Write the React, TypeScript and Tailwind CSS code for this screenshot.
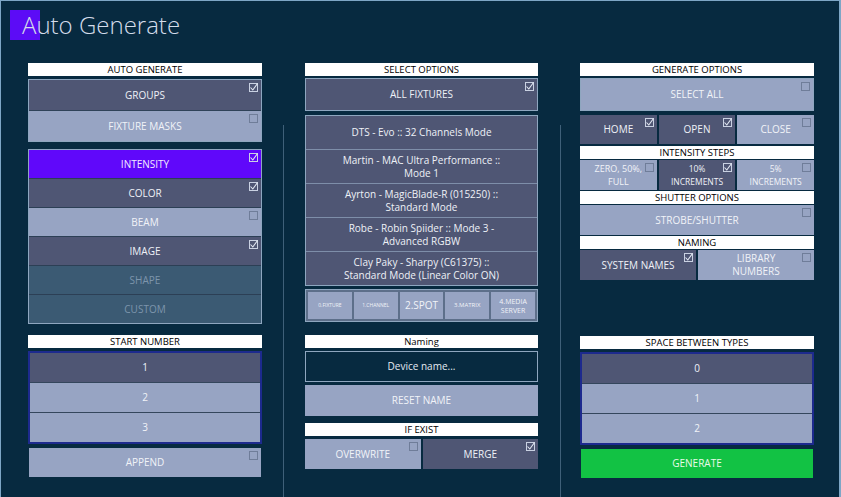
import React from "react";

type Tone = "dark" | "light" | "purple" | "dim" | "green";
type Mark = "on" | "off" | "none";

const toneClass: Record<Tone, string> = {
  dark: "bg-[#4f5674] text-[#eef1f7]",
  light: "bg-[#97a4c3] text-[#f1f3f8]",
  purple: "bg-[#6008fa] text-[#f3eaff]",
  dim: "bg-[#3b5a73] text-[#7d95ac]",
  green: "bg-[#12c244] text-[#eafbe9]",
};

const CheckMark = ({ mark }: { mark: Mark }) => {
  if (mark === "none") return null;
  return (
    <svg
      width="9"
      height="9"
      viewBox="0 0 9 9"
      className="absolute top-[3px] right-[3px]"
    >
      <rect
        x="0.5"
        y="0.5"
        width="8"
        height="8"
        fill="none"
        stroke={mark === "on" ? "#c9d1e2" : "#6f7d99"}
        strokeWidth="1"
      />
      {mark === "on" && (
        <path d="M1.5 4.5 L3.8 7 L8.5 0.5" fill="none" stroke="#e4e9f3" strokeWidth="1.1" />
      )}
    </svg>
  );
};

const Btn = ({
  label,
  tone = "dark",
  mark = "none",
  h,
  className = "",
  text = "text-[10px]",
}: {
  label: React.ReactNode;
  tone?: Tone;
  mark?: Mark;
  h: string;
  className?: string;
  text?: string;
}) => (
  <div
    className={`relative flex items-center justify-center text-center leading-[13px] ${toneClass[tone]} ${h} ${text} ${className}`}
  >
    {label}
    <CheckMark mark={mark} />
  </div>
);

const Header = ({ label, className = "" }: { label: string; className?: string }) => (
  <div
    className={`h-[13px] bg-white text-black text-[9.5px] leading-[13px] text-center font-medium ${className}`}
  >
    {label}
  </div>
);

const fixtures = [
  ["DTS - Evo :: 32 Channels Mode"],
  ["Martin - MAC Ultra Performance ::", "Mode 1"],
  ["Ayrton - MagicBlade-R (015250) ::", "Standard Mode"],
  ["Robe - Robin Spiider :: Mode 3 -", "Advanced RGBW"],
  ["Clay Paky - Sharpy (C61375) ::", "Standard Mode (Linear Color ON)"],
];

const Separator = () => <div className="w-px self-stretch mt-[62px] bg-[#3f6079]" />;

export default function App() {
  return (
    <div
      className="w-[841px] h-[497px] overflow-hidden bg-[#072a40] border-t border-l border-r-2 border-[#7ea6c6] flex flex-col"
      style={{ fontFamily: '"Open Sans", "Noto Sans", sans-serif' }}
    >
      {/* title */}
      <div className="h-[62px] shrink-0 pt-[9px] pl-[9px] flex items-start">
        <div className="w-[30px] h-[30px] bg-[#5c0cf6]" />
        <div className="ml-[-18px] mt-[-1px] text-[24px] font-light text-[#d4dcea] leading-[32px]">
          Auto Generate
        </div>
      </div>

      <div className="flex flex-1 pl-[27px]">
        {/* left column */}
        <div className="w-[234px] flex flex-col">
          <Header label="AUTO GENERATE" />
          <div className="mt-[3px] border border-[#8ea6bf] flex flex-col gap-px bg-[#2f4258]">
            <Btn label="GROUPS" tone="dark" mark="on" h="h-[30px]" />
            <Btn label="FIXTURE MASKS" tone="light" mark="off" h="h-[30px]" />
          </div>
          <div className="mt-[7px] border border-[#8ea6bf] flex flex-col gap-px bg-[#2c3f55]">
            <Btn label="INTENSITY" tone="purple" mark="on" h="h-[28px]" />
            <Btn label="COLOR" tone="dark" mark="on" h="h-[28px]" />
            <Btn label="BEAM" tone="light" mark="off" h="h-[28px]" />
            <Btn label="IMAGE" tone="dark" mark="on" h="h-[28px]" />
            <Btn label="SHAPE" tone="dim" h="h-[28px]" />
            <Btn label="CUSTOM" tone="dim" h="h-[28px]" />
          </div>
          <Header label="START NUMBER" className="mt-[11px]" />
          <div className="mt-[3px] border-2 border-[#1d2a8e] flex flex-col gap-px bg-[#34465c]">
            <Btn label="1" tone="dark" h="h-[29px]" />
            <Btn label="2" tone="light" h="h-[29px]" />
            <Btn label="3" tone="light" h="h-[29px]" />
          </div>
          <Btn label="APPEND" tone="light" mark="off" h="h-[29px]" className="mt-[4px] mx-[1px]" />
        </div>

        <div className="ml-[21px] mr-[21px] flex">
          <Separator />
        </div>

        {/* middle column */}
        <div className="w-[233px] flex flex-col">
          <Header label="SELECT OPTIONS" />
          <Btn
            label="ALL FIXTURES"
            tone="dark"
            mark="on"
            h="h-[33px]"
            className="mt-[2px] border border-[#8ea6bf]"
          />
          <div className="mt-[4px] border border-[#8ea6bf] flex flex-col gap-px bg-[#7e8ea9]">
            {fixtures.map((f, i) => (
              <div
                key={i}
                className="h-[33px] bg-[#4f5674] text-[#eef1f7] text-[10px] leading-[13px] flex items-center justify-center text-center"
              >
                <span>
                  {f[0]}
                  {f[1] && (
                    <>
                      <br />
                      {f[1]}
                    </>
                  )}
                </span>
              </div>
            ))}
          </div>
          <div className="mt-[3px] border border-[#8ea6bf] bg-[#5d6f8a] p-[2px] flex gap-[2px] h-[33px]">
            <Btn label="0.FIXTURE" tone="light" h="h-full" className="flex-1" text="text-[5px]" />
            <Btn label="1.CHANNEL" tone="light" h="h-full" className="flex-1" text="text-[5px]" />
            <Btn label="2.SPOT" tone="light" h="h-full" className="flex-1" text="text-[10px]" />
            <Btn label="3.MATRIX" tone="light" h="h-full" className="flex-1" text="text-[6px]" />
            <Btn
              label={
                <span className="leading-[9px]">
                  4.MEDIA
                  <br />
                  SERVER
                </span>
              }
              tone="light"
              h="h-full"
              className="flex-1"
              text="text-[7px]"
            />
          </div>
          <Header label="Naming" className="mt-[13px]" />
          <div className="mt-[3px] h-[31px] border border-[#8ea6bf] bg-[#072a40] text-[#e6ebf3] text-[10px] flex items-center justify-center">
            Device name...
          </div>
          <Btn label="RESET NAME" tone="light" h="h-[31px]" className="mt-[3px]" />
          <Header label="IF EXIST" className="mt-[7px]" />
          <div className="mt-[3px] flex gap-[2px]">
            <Btn label="OVERWRITE" tone="light" mark="off" h="h-[30px]" className="flex-1" />
            <Btn label="MERGE" tone="dark" mark="on" h="h-[30px]" className="flex-1" />
          </div>
        </div>

        <div className="ml-[22px] mr-[19px] flex">
          <Separator />
        </div>

        {/* right column */}
        <div className="w-[234px] flex flex-col">
          <Header label="GENERATE OPTIONS" />
          <Btn
            label="SELECT ALL"
            tone="light"
            mark="off"
            h="h-[33px]"
            className="mt-[2px] border border-[#8ea6bf]"
          />
          <div className="mt-[4px] flex gap-[2px]">
            <Btn label="HOME" tone="dark" mark="on" h="h-[29px]" className="flex-1" />
            <Btn label="OPEN" tone="dark" mark="on" h="h-[29px]" className="flex-1" />
            <Btn label="CLOSE" tone="light" mark="off" h="h-[29px]" className="flex-1" />
          </div>
          <Header label="INTENSITY STEPS" className="mt-[2px]" />
          <div className="mt-[1px] flex gap-[2px]">
            <Btn
              label={
                <span>
                  ZERO, 50%,
                  <br />
                  FULL
                </span>
              }
              tone="light"
              mark="off"
              h="h-[30px]"
              className="flex-1"
              text="text-[9px]"
            />
            <Btn
              label={
                <span>
                  10%
                  <br />
                  INCREMENTS
                </span>
              }
              tone="dark"
              mark="on"
              h="h-[30px]"
              className="flex-1"
              text="text-[8.5px]"
            />
            <Btn
              label={
                <span>
                  5%
                  <br />
                  INCREMENTS
                </span>
              }
              tone="light"
              mark="off"
              h="h-[30px]"
              className="flex-1"
              text="text-[8.5px]"
            />
          </div>
          <Header label="SHUTTER OPTIONS" className="mt-[1px]" />
          <Btn label="STROBE/SHUTTER" tone="light" mark="off" h="h-[30px]" className="mt-[1px]" />
          <Header label="NAMING" className="mt-[1px]" />
          <div className="mt-[1px] flex gap-[2px]">
            <Btn label="SYSTEM NAMES" tone="dark" mark="on" h="h-[30px]" className="flex-1" />
            <Btn
              label={
                <span>
                  LIBRARY
                  <br />
                  NUMBERS
                </span>
              }
              tone="light"
              mark="off"
              h="h-[30px]"
              className="flex-1"
            />
          </div>
          <Header label="SPACE BETWEEN TYPES" className="mt-[56px]" />
          <div className="mt-[3px] border-2 border-[#1d2a8e] flex flex-col gap-px bg-[#34465c]">
            <Btn label="0" tone="dark" h="h-[29px]" />
            <Btn label="1" tone="light" h="h-[29px]" />
            <Btn label="2" tone="light" h="h-[29px]" />
          </div>
          <Btn label="GENERATE" tone="green" h="h-[29px]" className="mt-[4px] mx-[1px]" />
        </div>
      </div>
    </div>
  );
}
